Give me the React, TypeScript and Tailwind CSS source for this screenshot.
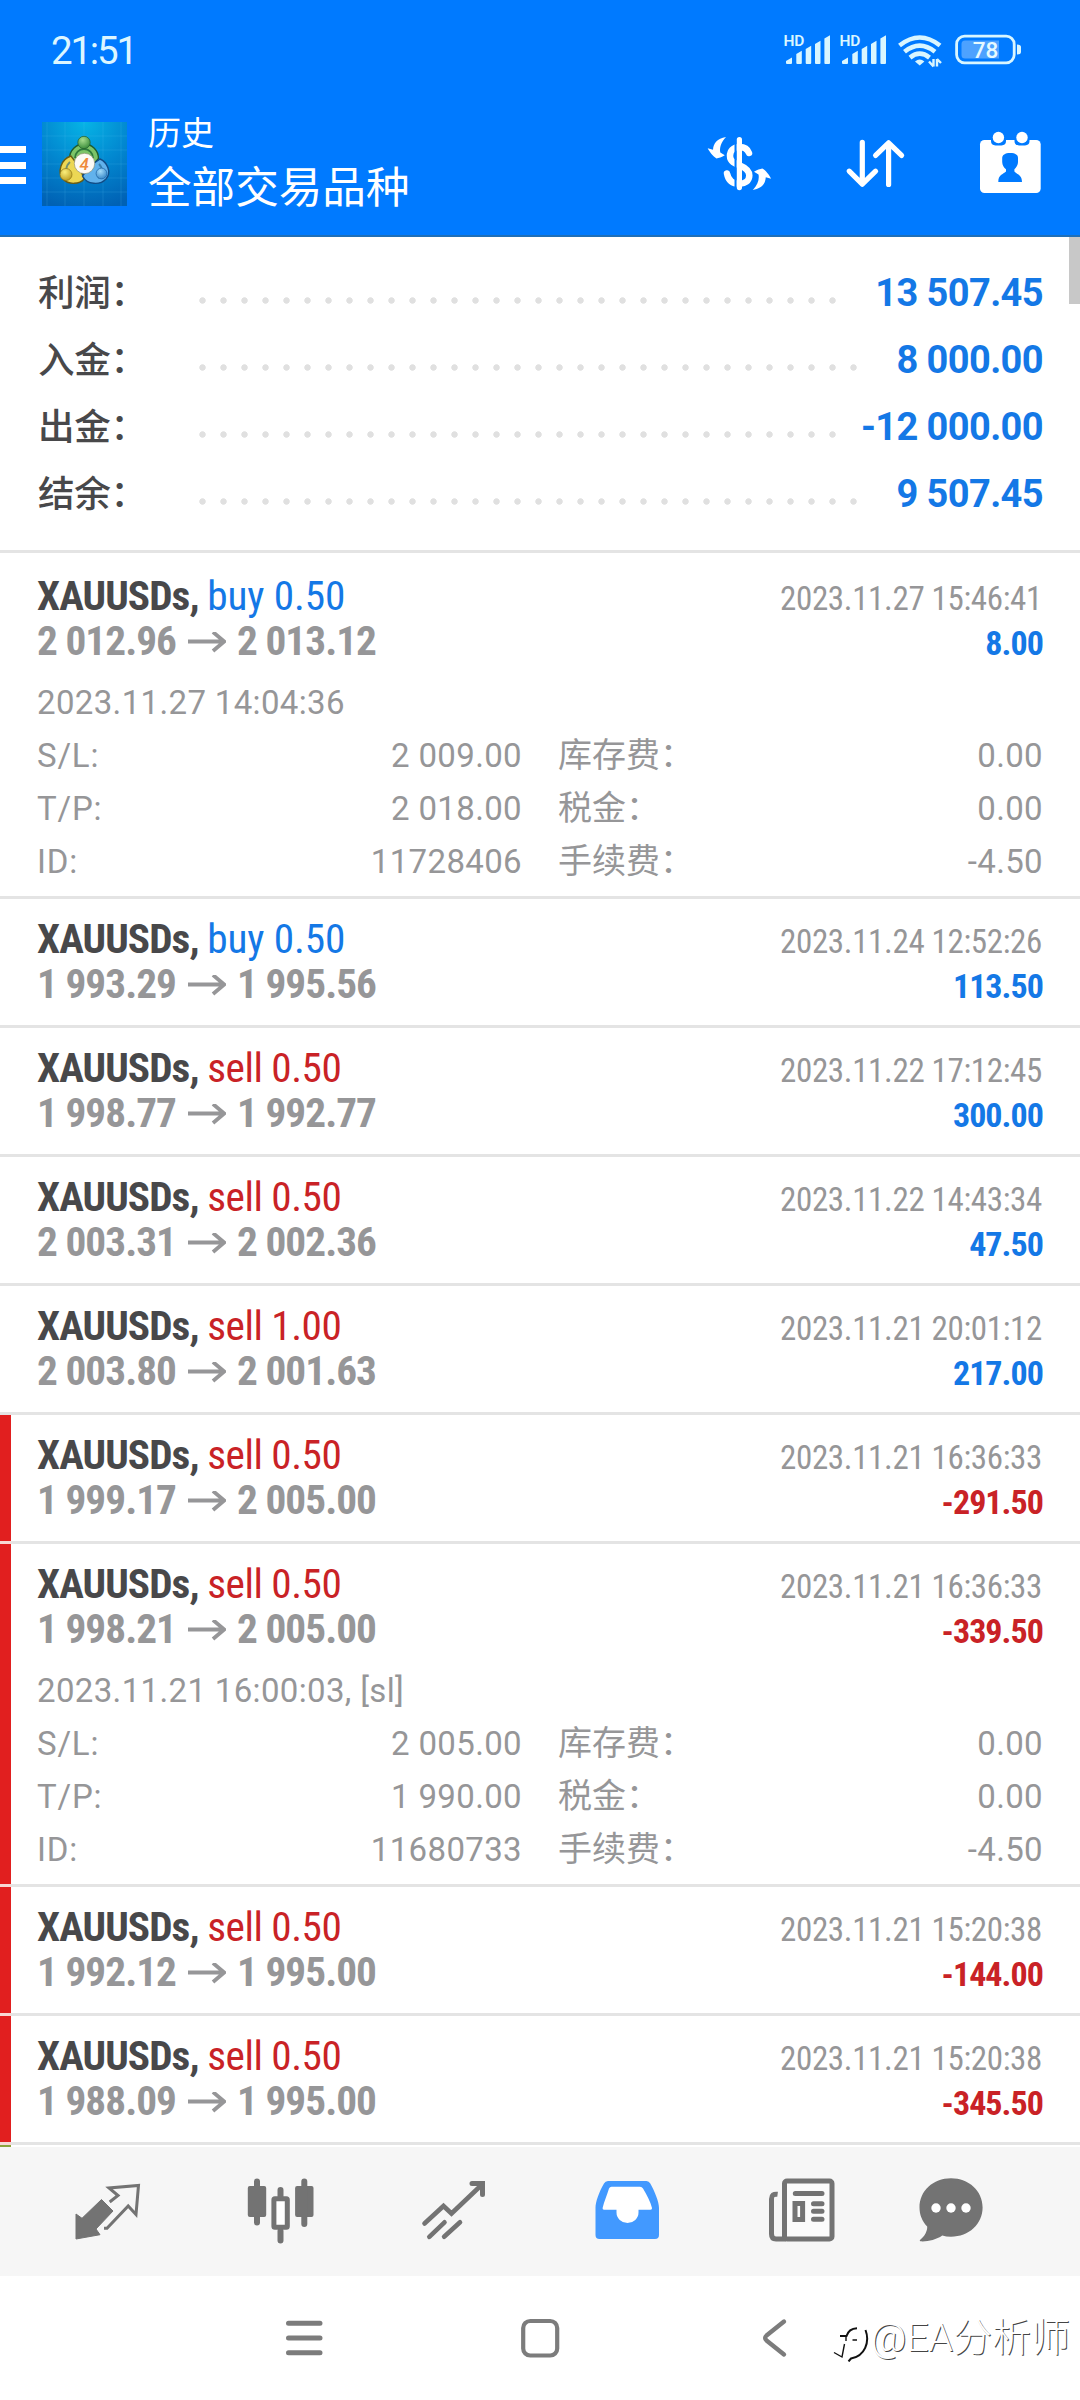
import type { ReactNode } from "react";

type Trade = {
  side: "buy" | "sell";
  volume: string;
  open: string;
  close: string;
  time: string;
  profit: string;
  flagged?: boolean;
  details?: { opened: string; sl: string; tp: string; id: string; swap: string; tax: string; fee: string };
};

const summary = [
  { label: "利润：", value: "13 507.45", dots: "w-[651px]" },
  { label: "入金：", value: "8 000.00", dots: "w-[672px]" },
  { label: "出金：", value: "-12 000.00", dots: "w-[651px]" },
  { label: "结余：", value: "9 507.45", dots: "w-[672px]" },
];

const trades: Trade[] = [
  {
    side: "buy", volume: "0.50", open: "2 012.96", close: "2 013.12", time: "2023.11.27 15:46:41", profit: "8.00",
    details: { opened: "2023.11.27 14:04:36", sl: "2 009.00", tp: "2 018.00", id: "11728406", swap: "0.00", tax: "0.00", fee: "-4.50" },
  },
  { side: "buy", volume: "0.50", open: "1 993.29", close: "1 995.56", time: "2023.11.24 12:52:26", profit: "113.50" },
  { side: "sell", volume: "0.50", open: "1 998.77", close: "1 992.77", time: "2023.11.22 17:12:45", profit: "300.00" },
  { side: "sell", volume: "0.50", open: "2 003.31", close: "2 002.36", time: "2023.11.22 14:43:34", profit: "47.50" },
  { side: "sell", volume: "1.00", open: "2 003.80", close: "2 001.63", time: "2023.11.21 20:01:12", profit: "217.00" },
  { side: "sell", volume: "0.50", open: "1 999.17", close: "2 005.00", time: "2023.11.21 16:36:33", profit: "-291.50", flagged: true },
  {
    side: "sell", volume: "0.50", open: "1 998.21", close: "2 005.00", time: "2023.11.21 16:36:33", profit: "-339.50", flagged: true,
    details: { opened: "2023.11.21 16:00:03, [sl]", sl: "2 005.00", tp: "1 990.00", id: "11680733", swap: "0.00", tax: "0.00", fee: "-4.50" },
  },
  { side: "sell", volume: "0.50", open: "1 992.12", close: "1 995.00", time: "2023.11.21 15:20:38", profit: "-144.00", flagged: true },
  { side: "sell", volume: "0.50", open: "1 988.09", close: "1 995.00", time: "2023.11.21 15:20:38", profit: "-345.50", flagged: true },
];

function Signal() {
  return (
    <svg className="h-10 w-[49px]" viewBox="783 30 49 40" fill="#d9f6ff">
      <text x="783.4" y="46" fontSize="15.5" fontWeight="600" fontFamily="Roboto">HD</text>
      <path d="M786 61L792 57.5V63Q792 64 791 64H787Q786 64 786 63Z" />
      <path d="M796.3 54L801.8 50.7V63Q801.8 64 800.8 64H797.3Q796.3 64 796.3 63Z" />
      <path d="M805.7 49L811.2 45.7V63Q811.2 64 810.2 64H806.7Q805.7 64 805.7 63Z" />
      <path d="M815 44L820.5 40.7V63Q820.5 64 819.5 64H816Q815 64 815 63Z" />
      <path d="M824.4 38.5L830 35.2V63Q830 64 829 64H825.4Q824.4 64 824.4 63Z" />
    </svg>
  );
}

function Wifi() {
  return (
    <svg className="h-10 w-[47px]" viewBox="896 30 47 40" fill="none" stroke="#d9f6ff" strokeWidth="4.6">
      <path d="M899.5 45.5Q919.7 29.5 940 45.5" />
      <path d="M904.5 51.8Q919.7 39.6 935 51.8" />
      <path d="M910 57.6Q919.7 49.8 929.5 57.6" />
      <path d="M915 61.5Q919.7 57.5 924.4 61.5L919.7 65.5Z" fill="#d9f6ff" stroke="none" />
      <path d="M933.5 59V66.5M933.5 66.5L929 61.5M937 66.5V59M937 59L941 63" strokeWidth="2.4" />
    </svg>
  );
}

function Battery() {
  return (
    <svg className="h-10 w-[68px]" viewBox="954 30 68 40">
      <rect x="956.6" y="36.2" width="57.6" height="26.6" rx="8" fill="none" stroke="#d9f6ff" strokeWidth="2.8" />
      <path d="M965 40.5H999V58.5H965Q961.5 58.5 961.5 55V44Q961.5 40.5 965 40.5Z" fill="#4da2ff" />
      <path d="M1017 44.5Q1021 44.5 1021 47V52Q1021 54.5 1017 54.5Z" fill="#d9f6ff" />
      <text x="972.8" y="58" fontSize="22.5" fontWeight="500" fontFamily="Roboto" fill="#e6faff">78</text>
    </svg>
  );
}

function AppLogo() {
  return (
    <svg className="mt-[22px] ml-4 h-[84px] w-[85px]" viewBox="0 0 85 84">
      <defs>
        <radialGradient id="sky" cx="0.5" cy="0" r="1.05">
          <stop offset="0" stopColor="#06b4e6" />
          <stop offset="0.5" stopColor="#0288d0" />
          <stop offset="1" stopColor="#0061b4" />
        </radialGradient>
        <radialGradient id="green" cx="0.4" cy="0.3" r="0.8">
          <stop offset="0" stopColor="#a5dc8c" />
          <stop offset="1" stopColor="#2e8432" />
        </radialGradient>
        <radialGradient id="gold" cx="0.4" cy="0.3" r="0.8">
          <stop offset="0" stopColor="#fbef7c" />
          <stop offset="1" stopColor="#b99a1c" />
        </radialGradient>
        <radialGradient id="azure" cx="0.4" cy="0.3" r="0.8">
          <stop offset="0" stopColor="#a4dcfa" />
          <stop offset="1" stopColor="#2c7fc4" />
        </radialGradient>
      </defs>
      <rect width="85" height="84" fill="url(#sky)" />
      <path d="M5 0V84M23 0V84M42 0V84M61 0V84M79 0V84M0 14H85M0 28H85M0 42H85M0 56H85M0 70H85" stroke="#5cc4f2" strokeOpacity="0.22" strokeWidth="0.8" />
      <path d="M27.500 36.500A14.500 14.500 0 1 1 56.500 36.500L50 44H34Z" fill="#7cc468" stroke="#1f5c2c" strokeWidth="1.400" />
      <path d="M29 34C19 37 15 50 21 57C27 63.500 38 62 42 57L38 46Z" fill="#ecd754" stroke="#6a5c12" strokeWidth="1.400" />
      <path d="M58 37C65 40 70 50 64 57C58 63.500 45 63 40.500 54L48 44Z" fill="#62b2ec" stroke="#124c86" strokeWidth="1.400" />
      <path d="M33 36A9 9 0 0 1 51 36" fill="none" stroke="#2f7a3c" strokeWidth="1.800" />
      <path d="M28 40C23.500 44 23 50 27 55M57 42C61 46 61 52 56 56" fill="none" stroke="#1c5f86" strokeOpacity="0.6" strokeWidth="1.800" />
      <circle cx="42" cy="20.500" r="6.200" fill="url(#green)" stroke="#1f5c2c" strokeWidth="0.700" />
      <circle cx="24" cy="52.500" r="6" fill="url(#gold)" stroke="#8c7416" strokeWidth="0.700" />
      <circle cx="59.500" cy="51.500" r="5.400" fill="url(#azure)" stroke="#1c62a4" strokeWidth="0.700" />
      <circle cx="42.500" cy="41.500" r="10.200" fill="#fdfaf6" stroke="#8a8a6a" strokeWidth="0.600" />
      <text x="42.3" y="47.600" textAnchor="middle" fontSize="17" fontWeight="500" fontStyle="italic" fontFamily="Roboto" fill="#ee8a3c">4</text>
    </svg>
  );
}

function CurrencyIcon() {
  const swoosh = "M726 137C717 138.5 713.5 143 713 149.8L707.7 148.3C709.5 152 713 156.5 716.5 158.4C718.5 158 722 157 724.8 155.2L720.3 152.6C719.3 148 721 142 726 137Z";
  return (
    <svg className="mt-[25px] h-20 w-20" viewBox="700 125 80 80" fill="#fff">
      <path
        d="M749 153C747 147.5 743 147 739.5 147C733 147 730 151.5 730 156C730 161.5 735 163.5 740 165.5C746 168 749.3 170.5 749.3 175.5C749.3 181 744.5 183.8 739.5 183.8C731.5 183.8 728 179 727 173.5"
        fill="none" stroke="#fff" strokeWidth="6.5" strokeLinecap="round"
      />
      <path d="M735.6 137V190" stroke="#007aff" strokeWidth="2.2" />
      <path d="M739.4 139.6V187.6" stroke="#fff" strokeWidth="5.2" strokeLinecap="round" />
      <path d={swoosh} />
      <path d={swoosh} transform="rotate(180 739.4 163.5)" />
    </svg>
  );
}

function SortIcon() {
  return (
    <svg className="mt-[25px] ml-14 h-20 w-20" viewBox="836 125 80 80" fill="none" stroke="#fff" strokeWidth="5.2" strokeLinecap="round" strokeLinejoin="round">
      <path d="M862.3 142.4V184M849.2 171.2L862.3 184.2L875.6 171.2" />
      <path d="M888.6 184.4V143M875.6 155.4L888.6 142.8L901.6 155.4" />
    </svg>
  );
}

function CalendarIcon() {
  return (
    <svg className="mt-[25px] ml-[54px] h-20 w-20" viewBox="970 125 80 80" fill="#fff">
      <rect x="980" y="140" width="60.7" height="53" rx="4.5" />
      <path d="M991 139V141Q991 145.4 995.5 145.4H1001.5Q1006 145.4 1006 141V139ZM1014.5 139V141Q1014.5 145.4 1019 145.4H1025Q1029.500 145.4 1029.500 141V139Z" fill="#007aff" />
      <circle cx="998.4" cy="137.5" r="5.7" />
      <circle cx="1022" cy="137.5" r="5.7" />
      <path d="M1010.2 153C1015.5 153 1018 155 1018 158V162C1018 165 1016 168 1014.4 169.200V171.500C1017 174.500 1022 174.500 1022 182H998.300C998.300 174.500 1003 174.500 1006 171.500V169.200C1004 168 1002.200 165 1002.200 162V158C1002.200 155 1005 153 1010.200 153Z" fill="#007aff" />
    </svg>
  );
}

function Header() {
  return (
    <header className="h-[237px] border-b-2 border-[#1f6fb8] bg-[#007aff]">
      <div className="flex h-[100px] items-start pr-[58px] pl-[51px] pt-[30px]">
        <span className="mr-auto text-[38.5px] leading-[42px] font-[450] tracking-[-2.2px] text-[#dcf6ff] [font-stretch:88%]">21:51</span>
        <Signal />
        <div className="w-[7px]" />
        <Signal />
        <div className="w-2" />
        <Wifi />
        <div className="w-[11px]" />
        <Battery />
      </div>
      <div className="flex h-[135px] items-start pr-[30px]">
        <div className="mt-[46px] flex w-[26px] flex-col gap-[8.5px]">
          <div className="h-[7px] bg-white" />
          <div className="h-[7px] bg-white" />
          <div className="h-[7px] bg-white" />
        </div>
        <AppLogo />
        <div className="mt-[11px] mr-auto ml-[21px] text-white">
          <div className="text-[33px] leading-[46px]">历史</div>
          <div className="mt-[3px] text-[43.6px] leading-[58px]">全部交易品种</div>
        </div>
        <CurrencyIcon />
        <SortIcon />
        <CalendarIcon />
      </div>
    </header>
  );
}

function Summary() {
  return (
    <section className="relative h-[316px] border-b-[3px] border-[#e4e4e4] pt-[23px] pr-[37px] pl-[38px]">
      {summary.map((row) => (
        <div key={row.label} className="flex h-[67px] items-baseline leading-[67px]">
          <span className="w-[154px] text-[36.6px] font-medium tracking-[-0.3px] text-[#48484a]">{row.label}</span>
          <span className={`mt-[30px] h-[21px] self-start bg-[radial-gradient(circle,#e0e0e0_2.8px,transparent_3.6px)] bg-[length:21px_21px] ${row.dots}`} />
          <span className="ml-auto text-[38px] font-bold tracking-[-0.6px] text-[#1478e6] [font-stretch:95%]">{row.value}</span>
        </div>
      ))}
      <div className="absolute top-0 right-0 h-[67px] w-[11px] bg-[#c8c8c8]" />
    </section>
  );
}

function Detail({ label, value, children }: { label: string; value: string; children: ReactNode }) {
  return (
    <div className="flex h-[53px] items-baseline">
      <span className="tracking-[0.8px]">{label}</span>
      <span className="ml-auto">{value}</span>
      {children}
    </div>
  );
}

function Extra({ label, value }: { label: string; value: string }) {
  return (
    <div className="ml-9 flex w-[485px] items-baseline justify-between">
      <span className="text-[34px] tracking-normal">{label}</span>
      <span>{value}</span>
    </div>
  );
}

function TradeRow({ trade, first }: { trade: Trade; first: boolean }) {
  const { details: d } = trade;
  const buy = trade.side === "buy";
  return (
    <article className={`flex ${first ? "pt-[3px]" : ""}`}>
      <div className={`w-[10.5px] shrink-0 border-b-[3px] ${trade.flagged ? "border-[#f8d8d4] bg-[#e11f1f]" : "border-[#e4e4e4]"}`} />
      <div className="flex-1 border-b-[3px] border-[#e4e4e4] pt-[18px] pr-[37px] pb-[18px] pl-[26.5px]">
        <div className="flex h-[45px] items-baseline leading-[45px] [font-stretch:75%]">
          <span className="text-[41.25px] font-bold tracking-[-0.9px] whitespace-pre text-[#48484a]">XAUUSDs, </span>
          <span className={`mr-auto text-[41.25px] ${buy ? "tracking-[-0.1px] text-[#1478e6]" : "tracking-[-0.5px] text-[#c92226]"}`}>
            {trade.side} {trade.volume}
          </span>
          <span className="mr-px text-[33px] tracking-[-0.34px] text-[#969698]">{trade.time}</span>
        </div>
        <div className="flex h-[45px] items-baseline leading-[45px] font-bold tracking-[-0.95px] [font-stretch:75%]">
          <span className="text-[41.25px] text-[#969698]">{trade.open}</span>
          <svg className="mr-[11px] ml-3 h-[23px] w-[38px]" viewBox="0 0 38 23" fill="none" stroke="#969698" strokeWidth="3.8">
            <path d="M0 9.500H36M25 0L36.200 9.500L25 19" />
          </svg>
          <span className="mr-auto text-[41.25px] text-[#969698]">{trade.close}</span>
          <span className={`text-[34px] ${trade.profit.startsWith("-") ? "text-[#c92226]" : "text-[#1478e6]"}`}>{trade.profit}</span>
        </div>
        {d && (
          <div className="mt-[11.5px] -mb-[10px] h-[212.5px] text-[33px] leading-[53px] tracking-[0.35px] text-[#969698]">
            <div className="h-[53px]">{d.opened}</div>
            <Detail label="S/L:" value={d.sl}><Extra label="库存费：" value={d.swap} /></Detail>
            <Detail label="T/P:" value={d.tp}><Extra label="税金：" value={d.tax} /></Detail>
            <Detail label="ID:" value={d.id}><Extra label="手续费：" value={d.fee} /></Detail>
          </div>
        )}
      </div>
    </article>
  );
}

function TabBar() {
  const icon = "h-20 w-20";
  return (
    <nav className="flex h-[129px] bg-[#f6f6f6] pl-[21px]">
      <div className="flex w-[173px] items-center justify-center">
        <svg className={icon} viewBox="68 2172 80 80" fill="none">
          <path d="M76 2214L82 2218.300L101.500 2199.500L113 2211L96 2229L100 2234.700L76 2239Z" fill="#737373" stroke="#737373" strokeWidth="1" strokeLinejoin="round" />
          <path d="M104 2228.300H107L128.200 2206L136 2214.500L138.500 2185.500L109 2188L118 2195.500L109.700 2202" stroke="#737373" strokeWidth="3" />
        </svg>
      </div>
      <div className="flex w-[173px] items-center justify-center">
        <svg className={icon} viewBox="240.5 2172 80 80" fill="#737373" stroke="#737373" strokeLinecap="round">
          <rect x="247.300" y="2186" width="18.400" height="31" rx="2" stroke="none" />
          <rect x="294.600" y="2186" width="18.400" height="31" rx="2" stroke="none" />
          <rect x="273.400" y="2198.700" width="13.400" height="28.600" rx="1" fill="#fff" strokeWidth="5" />
          <path d="M256.500 2181.500V2222.500M303.800 2181.500V2224M280 2190V2196M280 2231V2240.500" strokeWidth="6" />
        </svg>
      </div>
      <div className="flex w-[173px] items-center justify-center">
        <svg className={icon} viewBox="413.5 2172 80 80" fill="none" stroke="#737373" strokeWidth="4.600" strokeLinecap="round">
          <path d="M424 2223.500L443 2206L451 2213.500L481 2185" strokeLinejoin="miter" />
          <path d="M471.500 2183.500H482V2194.500" strokeWidth="5" />
          <path d="M428.800 2236.800L444 2222.300M443.600 2236.800L459.500 2222.300" />
        </svg>
      </div>
      <div className="flex w-[173px] items-center justify-center">
        <svg className={icon} viewBox="587 2172 80 80">
          <path d="M608 2181H646.500Q649 2181 650.300 2183.500C655 2192 659 2202 659 2208V2235Q659 2239 655 2239H599.500Q595.500 2239 595.500 2235V2208C595.500 2202 599 2192 604 2183.500Q605.300 2181 608 2181Z" fill="#4299ff" />
          <path d="M611.500 2186.700H640Q642 2186.700 643 2188.500C647 2195 650.500 2202 652 2208Q652.300 2209.700 650.500 2209.700H638.500V2212.500A11 10.500 0 0 1 616.500 2212.500V2209.700H604Q602.300 2209.700 602.600 2208C604 2202 607 2195 609 2188.500Q609.800 2186.700 611.500 2186.700Z" fill="#fff" />
        </svg>
      </div>
      <div className="flex w-[176px] items-center justify-center">
        <svg className={icon} viewBox="761 2172 80 80" fill="none" stroke="#737373" strokeWidth="5">
          <rect x="784.500" y="2181" width="47.500" height="58" rx="2.500" fill="#fbfbfb" />
          <path d="M777.600 2194.300Q771.500 2193.500 771.500 2199V2234Q771.500 2239 776 2239H786" />
          <path d="M795.300 2193.500H822M813.500 2203.700H822M813.500 2211.300H822M813.500 2219.300H822" strokeLinecap="round" />
          <rect x="795" y="2203.500" width="7.600" height="16" />
        </svg>
      </div>
      <div className="flex w-[124px] items-center justify-center">
        <svg className={icon} viewBox="911 2172 80 80" fill="#737373">
          <path d="M951 2178.300C969 2178.300 982.600 2191 982.600 2207.500C982.600 2224 969 2236.700 951 2236.700Q946 2236.700 942.300 2235.500C936 2240 927 2241.800 920.300 2241.300Q919.300 2240.800 920 2240C924.500 2236.500 927.500 2231 927.200 2226.500C922 2221 919.500 2214.500 919.500 2207.500C919.500 2191 933 2178.300 951 2178.300Z" />
          <circle cx="936" cy="2208" r="4.700" fill="#fff" />
          <circle cx="951" cy="2208" r="4.700" fill="#fff" />
          <circle cx="966" cy="2208" r="4.700" fill="#fff" />
        </svg>
      </div>
    </nav>
  );
}

function SystemNav() {
  return (
    <div className="relative flex h-[124px] items-start pt-[38px] pl-[284px]">
      <svg className="h-12 w-10" viewBox="284 2314 40 48" fill="none" stroke="#7c7c7c" strokeWidth="5" strokeLinecap="round">
        <path d="M288.500 2323.300H320M288.500 2338H320M288.500 2352.700H320" />
      </svg>
      <svg className="ml-[196px] h-12 w-10" viewBox="520 2314 40 48" fill="none" stroke="#7c7c7c" strokeWidth="4.200">
        <rect x="523.200" y="2321" width="34" height="34.500" rx="7" />
      </svg>
      <svg className="ml-[200px] h-12 w-8" viewBox="760 2314 32 48" fill="none" stroke="#7c7c7c" strokeWidth="4.400" strokeLinecap="round" strokeLinejoin="round">
        <path d="M784 2321.500L766.500 2335.500Q763.800 2338 766.500 2340.500L784 2354.500" />
      </svg>
      <div className="absolute top-[38px] right-[10px] flex items-center">
        <svg className="h-12 w-10" viewBox="829 2314 40 48" fill="none" stroke="#111" strokeWidth="2">
          <path d="M838 2336H844.500C846 2331 849.500 2328.500 855 2328.200" />
          <path d="M844 2336V2341M850.500 2340H855" strokeWidth="1.400" />
          <path d="M863.500 2330C868 2342 863 2356 849 2358.500L846.500 2361.500" />
          <path d="M842.500 2344L840 2357L832 2352.500" strokeWidth="1.400" />
        </svg>
        <span className="text-[39px] leading-[48px] font-light text-white [text-shadow:1px_1px_0_#444]">@EA分析师</span>
      </div>
    </div>
  );
}

export default function App() {
  return (
    <div className="h-[2400px] w-[1080px] overflow-hidden bg-white [font-family:Roboto,'Noto_Sans_CJK_SC',sans-serif]">
      <Header />
      <Summary />
      <main>
        {trades.map((trade, i) => (
          <TradeRow key={trade.open} trade={trade} first={i === 0} />
        ))}
      </main>
      <div className="h-[2px] bg-white">
        <div className="h-[2px] w-[10.5px] bg-[#8aa33c]" />
      </div>
      <TabBar />
      <SystemNav />
    </div>
  );
}
